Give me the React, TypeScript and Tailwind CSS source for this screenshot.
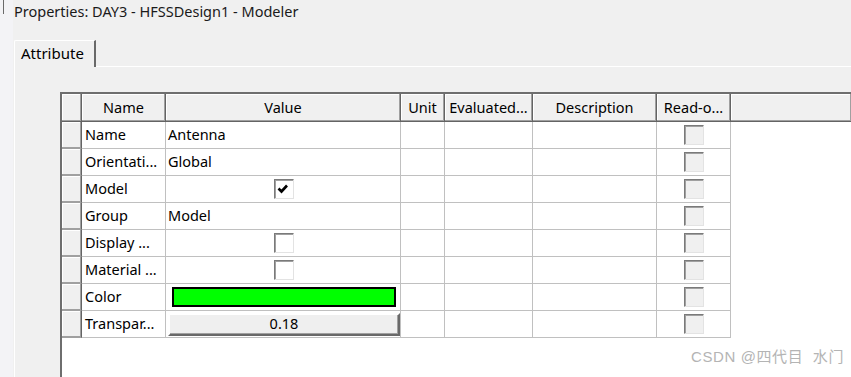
import React from 'react';

const font = { fontFamily: '"Noto Sans", "Open Sans", sans-serif' };

// column widths include the 1px right border
const cols = [
  { key: 'name', label: 'Name', w: 'w-[84px]' },
  { key: 'value', label: 'Value', w: 'w-[235px]' },
  { key: 'unit', label: 'Unit', w: 'w-[44px]' },
  { key: 'eval', label: 'Evaluated...', w: 'w-[88px]' },
  { key: 'desc', label: 'Description', w: 'w-[124px]' },
  { key: 'ro', label: 'Read-o...', w: 'w-[74px]' },
];

type Row = { name: string; kind: 'text' | 'check' | 'color' | 'button'; value?: string; checked?: boolean };

const rows: Row[] = [
  { name: 'Name', kind: 'text', value: 'Antenna' },
  { name: 'Orientati...', kind: 'text', value: 'Global' },
  { name: 'Model', kind: 'check', checked: true },
  { name: 'Group', kind: 'text', value: 'Model' },
  { name: 'Display ...', kind: 'check' },
  { name: 'Material ...', kind: 'check' },
  { name: 'Color', kind: 'color' },
  { name: 'Transpar...', kind: 'button', value: '0.18' },
];

const hdrCell =
  'h-full shrink-0 bg-[#f0f0f0] border-r border-b border-[#646464] shadow-[inset_-1px_-1px_0_#a0a0a0,inset_1px_1px_0_#ffffff]';

function CheckBox({ checked, disabled }: { checked?: boolean; disabled?: boolean }) {
  return (
    <div
      className={`w-[20px] h-[20px] border border-t-[#7a7a7a] border-l-[#7a7a7a] border-r-[#e3e3e3] border-b-[#e3e3e3] shadow-[inset_1px_1px_0_#a0a0a0] flex items-center justify-center ${
        disabled ? 'bg-[#f0f0f0]' : 'bg-white'
      }`}
    >
      {checked && (
        <svg width="18" height="18" viewBox="0 0 18 18">
          <path d="M3.5 8.5 L6.5 11.5 L12 5.5" fill="none" stroke="#000" strokeWidth="2.6" />
        </svg>
      )}
    </div>
  );
}

function ValueCell({ row }: { row: Row }) {
  if (row.kind === 'text') return <span className="pl-[2px]">{row.value}</span>;
  if (row.kind === 'check')
    return (
      <div className="flex-1 flex justify-center pl-[1px]">
        <CheckBox checked={row.checked} />
      </div>
    );
  if (row.kind === 'color')
    return <div className="ml-[6px] mr-[4px] flex-1 h-[20px] bg-[#00ff00] border-2 border-black" />;
  return (
    <div className="ml-[2px] flex-1 h-[23px] bg-[#efefef] border-2 border-t-white border-l-white border-r-[#696969] border-b-[#696969] shadow-[inset_-1px_-1px_0_#a0a0a0] flex items-center justify-center">
      {row.value}
    </div>
  );
}

export default function App() {
  return (
    <div
      className="w-[851px] h-[377px] bg-[#f0f0f0] overflow-hidden relative flex text-[14.5px] text-black"
      style={font}
    >
      {/* window edge behind */}
      <div className="w-[13px] shrink-0 bg-[#f3f3f6] flex">
        <div className="ml-[3px] w-[1px] h-[14px] bg-[#6a6a6a]" />
      </div>

      <div className="flex-1 flex flex-col min-w-0">
        <div className="h-[40px] pl-[1px] leading-[22px] text-[14.5px] text-[#1a1a1a] whitespace-nowrap">
          Properties: DAY3 - HFSSDesign1 - Modeler
        </div>

        {/* tabs */}
        <div className="h-[27px] flex">
          <div className="ml-[1px] w-[82px] bg-[#f0f0f0] border-l border-t border-white border-r-2 border-r-[#696969] rounded-tl-[2px] pl-[6px] leading-[24px] text-[15px]">
            Attribute
          </div>
          <div className="flex-1 border-b border-white" />
        </div>

        {/* panel */}
        <div className="flex-1 ml-[1px] border-l border-white pl-[45px] pt-[25px] flex flex-col">
          <div className="flex-1 bg-white border-l-2 border-t-2 border-[#6e6e6e] flex flex-col">
            {/* header */}
            <div className="h-[28px] flex shrink-0">
              <div className={`${hdrCell} w-[20px]`} />
              {cols.map((c) => (
                <div key={c.key} className={`${hdrCell} ${c.w} flex items-center justify-center whitespace-nowrap overflow-hidden`}>
                  {c.label}
                </div>
              ))}
              <div className={`${hdrCell} flex-1 border-r-0`} />
            </div>

            {rows.map((r) => (
              <div key={r.name} className="h-[27px] flex shrink-0">
                <div className={`${hdrCell} w-[20px] border-b-[#a0a0a0]`} />
                <div className="w-[84px] shrink-0 border-r border-b border-[#c0c0c0] flex items-center pl-[3px] whitespace-nowrap overflow-hidden">
                  {r.name}
                </div>
                <div className="w-[235px] shrink-0 border-r border-b border-[#c0c0c0] flex items-center whitespace-nowrap">
                  <ValueCell row={r} />
                </div>
                <div className="w-[44px] shrink-0 border-r border-b border-[#c0c0c0]" />
                <div className="w-[88px] shrink-0 border-r border-b border-[#c0c0c0]" />
                <div className="w-[124px] shrink-0 border-r border-b border-[#c0c0c0]" />
                <div className="w-[74px] shrink-0 border-r border-b border-[#c0c0c0] flex items-center justify-center">
                  <CheckBox disabled />
                </div>
              </div>
            ))}
          </div>
        </div>
      </div>

      <div
        className="absolute left-[691px] top-[346px] text-[15px] text-[#b4b4b4] tracking-[0.6px] whitespace-nowrap"
        style={{ fontFamily: '"Liberation Sans", "Noto Sans CJK SC", sans-serif' }}
      >
        CSDN @四代目&nbsp;&nbsp;水门
      </div>
    </div>
  );
}
